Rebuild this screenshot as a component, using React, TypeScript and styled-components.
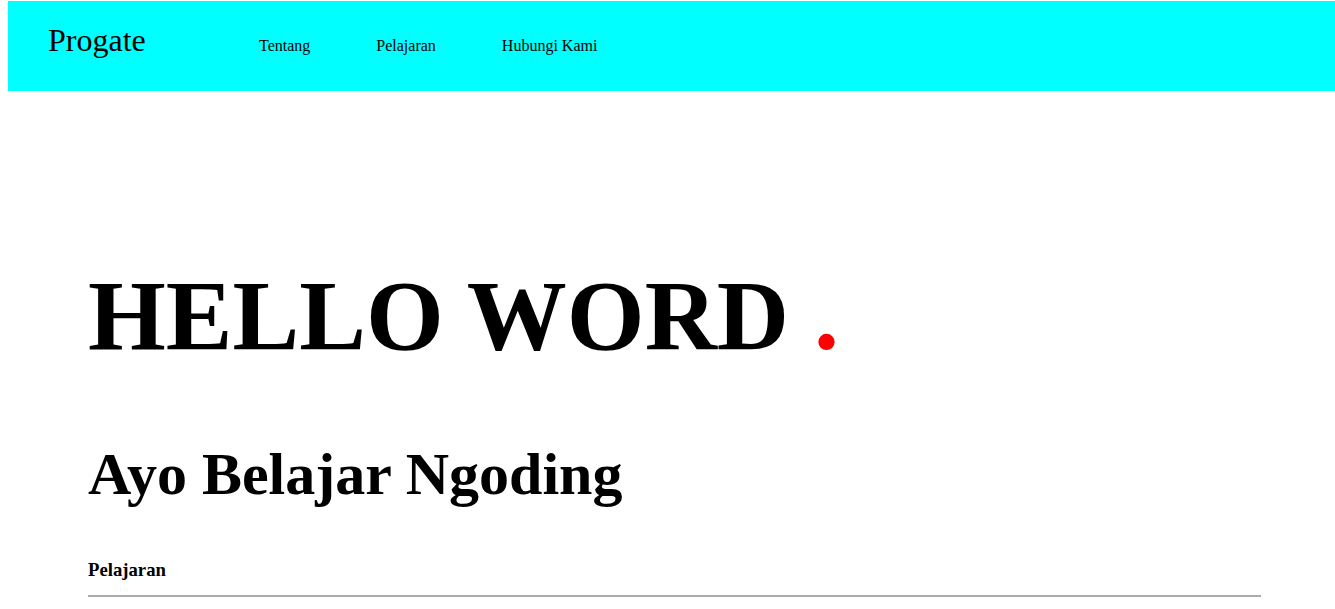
import React from "react";
import styled, { createGlobalStyle } from "styled-components";

const Global = createGlobalStyle`
  html, body { background: #ffffff; }
  body {
    margin: 1px 0 0 8px;
    font-family: "Liberation Serif", "Times New Roman", serif;
    color: #000;
    overflow: hidden;
  }
`;

const Header = styled.header`
  height: 90px;
  background: #00ffff;
  display: flex;
  align-items: baseline;
  padding: 21px 0 0 40px;
  box-sizing: border-box;
`;

const Logo = styled.div`
  font-size: 32px;
  line-height: 36px;
  width: 211px;
`;

const Nav = styled.nav`
  display: flex;
  align-items: baseline;
  gap: 66px;
`;

const NavItem = styled.a`
  font-size: 16px;
  color: #000;
  text-decoration: none;
`;

const Main = styled.main`
  padding: 0 74px 0 80px;
`;

const Title = styled.h1`
  margin: 175px 0 0;
  font-size: 100px;
  line-height: 100px;
  font-weight: bold;
  white-space: nowrap;
`;

const Dot = styled.span`
  color: #ff0000;
`;

const Subtitle = styled.h2`
  margin: 78px 0 0;
  font-size: 60px;
  line-height: 60px;
  font-weight: bold;
`;

const Section = styled.h3`
  margin: 55px 0 0;
  font-size: 18.72px;
  line-height: 22px;
  font-weight: bold;
`;

const Rule = styled.hr`
  margin: 14px 0 0;
  border: none;
  border-top: 2px solid #aaaaaa;
  height: 0;
`;

export default function App() {
  return (
    <>
      <Global />
      <Header>
        <Logo>Progate</Logo>
        <Nav>
          <NavItem>Tentang</NavItem>
          <NavItem>Pelajaran</NavItem>
          <NavItem>Hubungi Kami</NavItem>
        </Nav>
      </Header>
      <Main>
        <Title>
          HELLO WORD <Dot>.</Dot>
        </Title>
        <Subtitle>Ayo Belajar Ngoding</Subtitle>
        <Section>Pelajaran</Section>
        <Rule />
      </Main>
    </>
  );
}
